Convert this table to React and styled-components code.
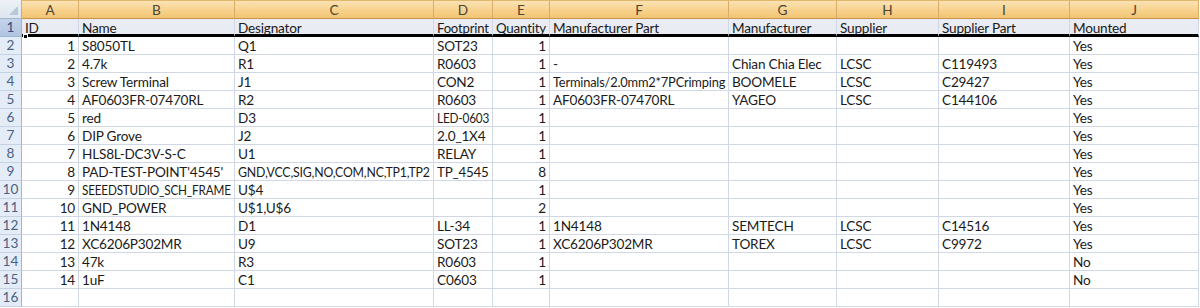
import React, { useLayoutEffect, useRef, useState } from 'react';
import styled, { createGlobalStyle } from 'styled-components';

const GlobalStyle = createGlobalStyle`
  html, body {
    margin: 0;
    padding: 0;
    background: #ffffff;
    overflow: hidden;
  }
  * { box-sizing: border-box; }
`;

const COLS = [
  { key: 'A', w: 57 },
  { key: 'B', w: 156 },
  { key: 'C', w: 199 },
  { key: 'D', w: 59 },
  { key: 'E', w: 57 },
  { key: 'F', w: 179 },
  { key: 'G', w: 108 },
  { key: 'H', w: 102 },
  { key: 'I', w: 131 },
  { key: 'J', w: 129 },
];

const HEADER = ['ID', 'Name', 'Designator', 'Footprint', 'Quantity', 'Manufacturer Part', 'Manufacturer', 'Supplier', 'Supplier Part', 'Mounted'];

const ROWS = [
  [1, 'S8050TL', 'Q1', 'SOT23', 1, '', '', '', '', 'Yes'],
  [2, '4.7k', 'R1', 'R0603', 1, '-', 'Chian Chia Elec', 'LCSC', 'C119493', 'Yes'],
  [3, 'Screw Terminal', 'J1', 'CON2', 1, 'Terminals/2.0mm2*7PCrimping', 'BOOMELE', 'LCSC', 'C29427', 'Yes'],
  [4, 'AF0603FR-07470RL', 'R2', 'R0603', 1, 'AF0603FR-07470RL', 'YAGEO', 'LCSC', 'C144106', 'Yes'],
  [5, 'red', 'D3', 'LED-0603', 1, '', '', '', '', 'Yes'],
  [6, 'DIP Grove', 'J2', '2.0_1X4', 1, '', '', '', '', 'Yes'],
  [7, 'HLS8L-DC3V-S-C', 'U1', 'RELAY', 1, '', '', '', '', 'Yes'],
  [8, "PAD-TEST-POINT'4545'", 'GND,VCC,SIG,NO,COM,NC,TP1,TP2', 'TP_4545', 8, '', '', '', '', 'Yes'],
  [9, 'SEEEDSTUDIO_SCH_FRAME', 'U$4', '', 1, '', '', '', '', 'Yes'],
  [10, 'GND_POWER', 'U$1,U$6', '', 2, '', '', '', '', 'Yes'],
  [11, '1N4148', 'D1', 'LL-34', 1, '1N4148', 'SEMTECH', 'LCSC', 'C14516', 'Yes'],
  [12, 'XC6206P302MR', 'U9', 'SOT23', 1, 'XC6206P302MR', 'TOREX', 'LCSC', 'C9972', 'Yes'],
  [13, '47k', 'R3', 'R0603', 1, '', '', '', '', 'No'],
  [14, '1uF', 'C1', 'C0603', 1, '', '', '', '', 'No'],
  ['', '', '', '', '', '', '', '', '', ''],
];

const Sheet = styled.div`
  position: relative;
  display: grid;
  grid-template-columns: 22px ${COLS.map(c => `${c.w}px`).join(' ')};
  grid-template-rows: 19px repeat(16, 18px);
  width: 1200px;
  height: 308px;
  font-family: Lato, "Liberation Sans", sans-serif;
  font-size: 13.6px;
  color: #1b1b1b;
`;

const Corner = styled.div`
  position: relative;
  background: linear-gradient(#eef2f8, #dde5ef);
  border-right: 1px solid #9eb6ce;
  border-bottom: 1px solid #9eb6ce;

  &::after {
    content: '';
    position: absolute;
    right: 3px;
    bottom: 3px;
    border-style: solid;
    border-width: 0 0 9px 9px;
    border-color: transparent transparent #b9c7d9 transparent;
  }
`;

const ColHead = styled.div`
  display: flex;
  align-items: center;
  justify-content: center;
  background: linear-gradient(#fae2b4 0%, #f8d593 45%, #f3c473 100%);
  border-top: 1px solid #e0b86e;
  border-right: 1px solid #d7ae68;
  border-bottom: 1px solid #c7944c;
  color: #4b4536;
  font-size: 13.6px;
  line-height: 17px;
  padding-top: 1px;
`;

const RowHead = styled.div`
  display: flex;
  align-items: center;
  justify-content: center;
  background: ${p => (p.$active ? 'linear-gradient(#c3d3ea, #b1c4e2)' : '#e4ecf7')};
  border-right: 1px solid #9eb6ce;
  border-bottom: 1px solid ${p => (p.$active ? '#9eb6ce' : '#c5d2e3')};
  color: ${p => (p.$active ? '#2f4d7d' : '#4a6285')};
  font-size: 13.6px;
  line-height: 17px;
`;

const Box = styled.div`
  display: flex;
  align-items: center;
  justify-content: ${p => (p.$num ? 'flex-end' : 'flex-start')};
  padding: ${p => (p.$head ? '2px 3px 0 3px' : '1px 3px 0 3px')};
  background: ${p => (p.$head ? '#e9ecf2' : '#ffffff')};
  border-right: 1px solid #d0d7e5;
  border-bottom: ${p => (p.$head ? '3px solid #000000' : '1px solid #d0d7e5')};
  line-height: 16px;
  white-space: nowrap;
  overflow: hidden;
  min-width: 0;
`;

const Text = styled.span`
  display: inline-block;
  letter-spacing: -0.2px;
  transform-origin: left center;
`;

// Excel's Calibri is narrower than any installed font, so squeeze long texts to the cell
function Cell({ children, num, head }) {
  const boxRef = useRef(null);
  const textRef = useRef(null);
  const [scale, setScale] = useState(1);

  useLayoutEffect(() => {
    const room = boxRef.current.clientWidth - 6;
    const need = textRef.current.scrollWidth;
    if (need > room) setScale(room / need);
  }, [children]);

  return (
    <Box ref={boxRef} $num={num} $head={head}>
      <Text ref={textRef} style={scale < 1 ? { transform: `scaleX(${scale})` } : undefined}>
        {children}
      </Text>
    </Box>
  );
}

const FillHandle = styled.div`
  position: absolute;
  left: 23px;
  top: 34px;
  width: 5px;
  height: 5px;
  background: #000000;
  border: 1px solid #ffffff;
`;

export default function App() {
  return (
    <>
      <GlobalStyle />
      <Sheet>
        <Corner />
        {COLS.map(c => (
          <ColHead key={c.key}>{c.key}</ColHead>
        ))}

        <RowHead $active>1</RowHead>
        {HEADER.map((h, i) => (
          <Cell key={i} head>{h}</Cell>
        ))}

        {ROWS.map((row, r) => (
          <React.Fragment key={r}>
            <RowHead>{r + 2}</RowHead>
            {row.map((v, i) => (
              <Cell key={i} num={typeof v === 'number'}>{v}</Cell>
            ))}
          </React.Fragment>
        ))}
        <FillHandle />
      </Sheet>
    </>
  );
}
